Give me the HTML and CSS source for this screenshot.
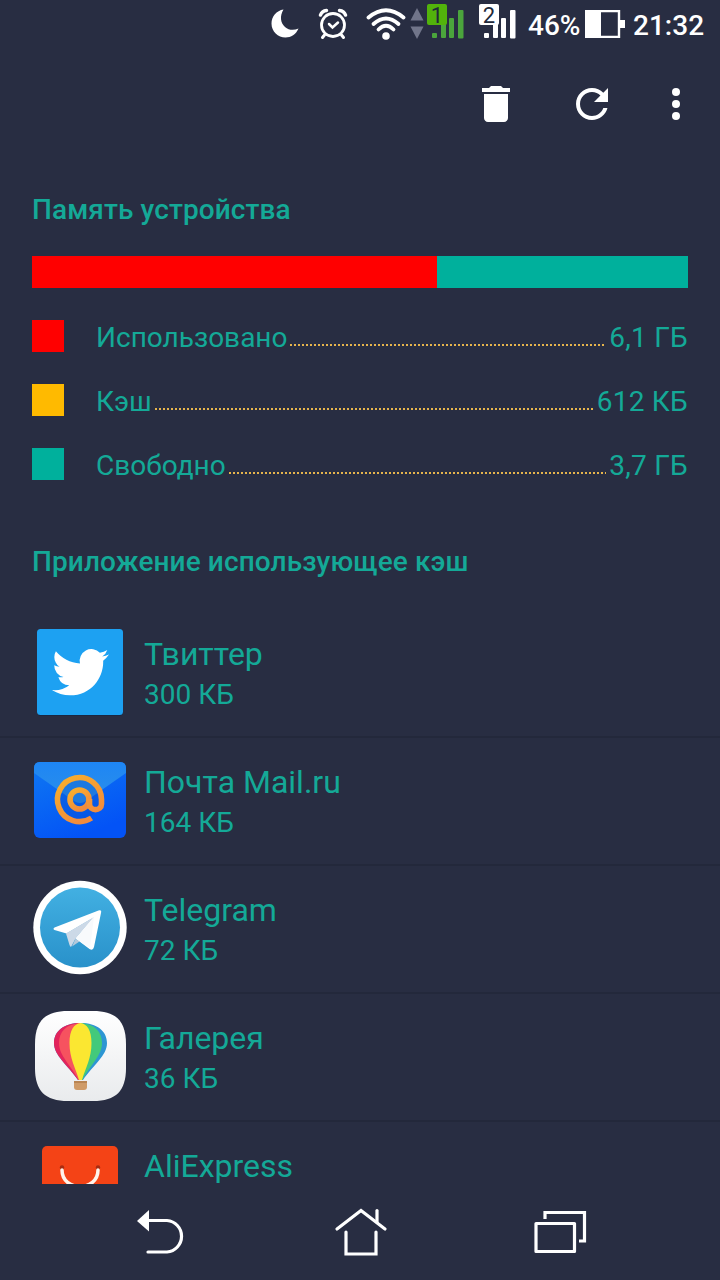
FILE: index.html
```
<!DOCTYPE html>
<html lang="ru">
<head>
    <meta charset="UTF-8">
    <meta name="viewport" content="width=device-width, initial-scale=1.0">
    <title>Очистка кэша</title>
    <link rel="stylesheet" href="styles.css">
</head>
<body>
    <div class="screen">
        <!-- Status bar -->
        <div class="status-bar">
            <svg class="moon" width="28" height="30" viewBox="0 0 28 30">
                <path d="M12.500 0.500C8.500 7 9.500 14 14 18C18 21.500 23 21.500 27.500 19.500C25 25.500 20 28.500 14.500 28.500C7 28.500 0.500 22.500 0.500 14.500C0.500 7.500 5.500 1.500 12.500 0.500Z" fill="#fff"/>
            </svg>
            <svg class="alarm" width="30" height="32" viewBox="0 0 30 32" fill="none" stroke="#fff" stroke-linecap="round">
                <circle cx="15" cy="17" r="11.500" stroke-width="2.800"/>
                <path d="M2.500 7Q4 3 8.500 2.500M27.500 7Q26 3 21.500 2.500" stroke-width="3.500"/>
                <path d="M6.500 27L4.500 29.500M23.500 27L25.500 29.500" stroke-width="3"/>
                <path d="M11 16L14.500 19.500L20 14.500" stroke-width="2.500"/>
            </svg>
            <svg class="wifi" width="40" height="32" viewBox="0 0 40 32" fill="none" stroke="#fff" stroke-width="3.800" stroke-linecap="round">
                <path d="M2.500 9.500Q20 -5 37.500 9.500"/>
                <path d="M7.500 16Q20 5 32.500 16"/>
                <path d="M12.500 21.500Q20 14 27.500 21.500"/>
                <circle cx="20" cy="28" r="3.800" fill="#fff" stroke="none"/>
            </svg>
            <svg class="traffic" width="14" height="32" viewBox="0 0 14 32" fill="#71758a">
                <path d="M7 0L13.500 12.500H0.500Z"/>
                <path d="M0.500 18.500H13.500L7 31Z"/>
            </svg>
            <svg class="sim" width="38" height="40" viewBox="0 -4 38 40">
                <g fill="#4ba53c">
                    <rect x="5" y="29" width="5" height="5" rx="1"/>
                    <rect x="14" y="17" width="5" height="17" rx="1"/>
                    <rect x="22" y="14" width="5" height="20" rx="1"/>
                    <rect x="31" y="6" width="5.500" height="28.500" rx="1"/>
                </g>
                <rect width="20" height="21" rx="2" fill="#52b30b"/>
                <text x="10" y="18.500" class="sim-number">1</text>
            </svg>
            <svg class="sim second" width="38" height="40" viewBox="0 -4 38 40">
                <g fill="#fff">
                    <rect x="5" y="29" width="5" height="5" rx="1"/>
                    <rect x="14" y="17" width="5" height="17" rx="1"/>
                    <rect x="22" y="14" width="5" height="20" rx="1"/>
                    <rect x="31" y="6" width="5.500" height="28.500" rx="1"/>
                    <rect width="20" height="21" rx="2"/>
                </g>
                <text x="10" y="18.500" class="sim-number">2</text>
            </svg>
            <span class="percent">46%</span>
            <svg class="battery" width="40" height="28" viewBox="0 0 40 28">
                <path d="M1 1H34V27H1Z" fill="none" stroke="#fff" stroke-width="2.400"/>
                <path d="M0 0H16V28H0ZM35 10H40V18H35Z" fill="#fff"/>
            </svg>
            <span class="clock">21:32</span>
        </div>

        <!-- Toolbar -->
        <div class="toolbar">
            <svg width="48" height="48" viewBox="0 0 24 24" fill="#fff">
                <path d="M6 19c0 1.100.9 2 2 2h8c1.100 0 2-.9 2-2V7H6v12zM19 4h-3.500l-1-1h-5l-1 1H5v2h14V4z"/>
            </svg>
            <svg width="48" height="48" viewBox="0 0 24 24" fill="#fff">
                <path d="M17.650 6.350C16.200 4.900 14.210 4 12 4c-4.420 0-7.990 3.580-7.990 8s3.570 8 7.990 8c3.730 0 6.840-2.550 7.730-6h-2.080c-.82 2.330-3.040 4-5.650 4-3.310 0-6-2.690-6-6s2.690-6 6-6c1.660 0 3.140.69 4.220 1.780L13 11h7V4l-2.350 2.350z"/>
            </svg>
            <svg class="more" width="48" height="48" viewBox="0 0 24 24" fill="#fff">
                <circle cx="12" cy="6" r="2"/>
                <circle cx="12" cy="12" r="2"/>
                <circle cx="12" cy="18" r="2"/>
            </svg>
        </div>

        <!-- Storage -->
        <div class="storage">
            <h2>Память устройства</h2>
            <div class="bar">
                <div class="bar-used" style="width: 61.7%"></div>
            </div>
            <div class="legend">
                <div class="legend-row">
                    <span class="swatch used"></span>
                    <span>Использовано</span>
                    <span class="dots"></span>
                    <span class="value">6,1 ГБ</span>
                </div>
                <div class="legend-row">
                    <span class="swatch cache"></span>
                    <span>Кэш</span>
                    <span class="dots"></span>
                    <span class="value">612 КБ</span>
                </div>
                <div class="legend-row">
                    <span class="swatch free"></span>
                    <span>Свободно</span>
                    <span class="dots"></span>
                    <span class="value">3,7 ГБ</span>
                </div>
            </div>
            <h2 class="apps-title">Приложение использующее кэш</h2>
        </div>

        <!-- Apps -->
        <div class="apps">
            <div class="app">
                <svg width="96" height="96" viewBox="0 0 96 96">
                    <rect x="5" y="6" width="86" height="86" rx="4" fill="#1b2742"/>
                    <rect x="5" y="5" width="86" height="86" rx="3.500" fill="#1da1f2"/>
                    <path transform="translate(20 19.700) scale(2.375)" fill="#fff" d="M23.953 4.570a10 10 0 01-2.825.775 4.958 4.958 0 002.163-2.723c-.951.555-2.005.959-3.127 1.184a4.920 4.920 0 00-8.384 4.482C7.690 8.095 4.067 6.130 1.640 3.162a4.822 4.822 0 00-.666 2.475c0 1.710.87 3.213 2.188 4.096a4.904 4.904 0 01-2.228-.616v.06a4.923 4.923 0 003.946 4.827 4.996 4.996 0 01-2.212.085 4.936 4.936 0 004.604 3.417 9.867 9.867 0 01-6.102 2.105c-.39 0-.779-.023-1.170-.067a13.995 13.995 0 007.557 2.209c9.053 0 13.998-7.496 13.998-13.985 0-.21 0-.42-.015-.63A9.935 9.935 0 0024 4.590z"/>
                </svg>
                <div class="app-info">
                    <div class="name">Твиттер</div>
                    <div class="size">300 КБ</div>
                </div>
            </div>
            <div class="app">
                <svg width="96" height="96" viewBox="0 0 96 96">
                    <defs>
                        <linearGradient id="mailBody" x1="0" y1="0" x2="0.500" y2="1">
                            <stop offset="0" stop-color="#0f78f2"/>
                            <stop offset="1" stop-color="#0353f6"/>
                        </linearGradient>
                        <linearGradient id="mailFlap" x1="0" y1="0" x2="0" y2="1">
                            <stop offset="0" stop-color="#1e86f5"/>
                            <stop offset="1" stop-color="#2b8fe8"/>
                        </linearGradient>
                        <linearGradient id="mailAt" x1="0" y1="0" x2="0.600" y2="1">
                            <stop offset="0" stop-color="#f9b02c"/>
                            <stop offset="1" stop-color="#f28b3c"/>
                        </linearGradient>
                    </defs>
                    <rect x="2" y="10" width="92" height="76" rx="6" fill="url(#mailBody)"/>
                    <path d="M2 21V16Q2 10 8 10H88Q94 10 94 16V21L54 49Q48 53 42 49Z" fill="url(#mailFlap)"/>
                    <circle cx="47.500" cy="47.500" r="20" fill="#0b4fc4" fill-opacity="0.300"/>
                    <g fill="none" stroke="url(#mailAt)" stroke-width="5.600">
                        <circle cx="47.500" cy="47.500" r="9.500"/>
                        <path d="M59.500 66A22 22 0 1 1 69.500 47.500V52C69.500 59.500 57.500 59.500 57.500 52V47"/>
                    </g>
                </svg>
                <div class="app-info">
                    <div class="name">Почта Mail.ru</div>
                    <div class="size">164 КБ</div>
                </div>
            </div>
            <div class="app">
                <svg width="96" height="96" viewBox="0 0 96 96">
                    <defs>
                        <linearGradient id="tgBody" x1="0" y1="0" x2="0" y2="1">
                            <stop offset="0" stop-color="#42b0e2"/>
                            <stop offset="1" stop-color="#2991ca"/>
                        </linearGradient>
                    </defs>
                    <circle cx="48" cy="47.500" r="46.700" fill="#fff"/>
                    <circle cx="48" cy="47.500" r="40" fill="url(#tgBody)"/>
                    <path d="M22.500 47.500L66.500 30.500Q70 29.500 69 33L62 67Q61 71 57.500 69L43.500 58.500L60 38.500L34.500 53.500L22.500 50Q20.500 48.800 22.500 47.500Z" fill="#fff"/>
                    <path d="M43.500 58.500L39 67Q38 66.500 37.500 65L34 53.500L62 37Z" fill="#ccd9e7"/>
                    <path d="M43.500 58.500L40 66.500L47.500 61.500Z" fill="#b4c8da"/>
                    <path d="M43.500 58.500L62 37L58 68Z" fill="#f8fafc"/>
                </svg>
                <div class="app-info">
                    <div class="name">Telegram</div>
                    <div class="size">72 КБ</div>
                </div>
            </div>
            <div class="app">
                <svg width="96" height="96" viewBox="0 0 96 96">
                    <defs>
                        <linearGradient id="galleryBody" x1="0" y1="0" x2="0" y2="1">
                            <stop offset="0" stop-color="#fff"/>
                            <stop offset="1" stop-color="#e9ebed"/>
                        </linearGradient>
                    </defs>
                    <path d="M36 3H61C84 3 94 13 94 36V60C94 83 84 93 61 93H36C13 93 3 83 3 60V36C3 13 13 3 36 3Z" fill="url(#galleryBody)"/>
                    <path d="M48.500 15C32 15 22 23 22 35C22 48 36 57 46 72H51C61 57 75 48 75 35C75 23 65 15 48.500 15Z" fill="#2d96d3"/>
                    <path d="M48.500 15C32 15 22 23 22 35C22 48 36 57 46 72H49Z" fill="#e3245c"/>
                    <path d="M48.500 15C34 16 27 24 27 35C27 48 39 57 46.500 72H49Z" fill="#f6525f"/>
                    <path d="M48.500 15C63 16 70 24 70 35C70 48 58 57 50.500 72H48Z" fill="#43c97b"/>
                    <path d="M48.500 15C42 16 37.500 22 37.500 35C37.500 50 43.500 60 47 72H50C53.500 60 59.500 50 59.500 35C59.500 22 55 16 48.500 15Z" fill="#fbe731"/>
                    <path d="M42 73H55V79Q55 82 52 82H45Q42 82 42 79Z" fill="#cf9b68"/>
                    <path d="M42 73H55V75H42Z" fill="#b98553"/>
                </svg>
                <div class="app-info">
                    <div class="name">Галерея</div>
                    <div class="size">36 КБ</div>
                </div>
            </div>
            <div class="app">
                <svg width="96" height="96" viewBox="0 0 96 96">
                    <rect x="10" y="10" width="76" height="76" rx="5" fill="#f44316"/>
                    <circle cx="30" cy="31.500" r="2.200" fill="#a82c10"/>
                    <circle cx="66" cy="31.500" r="2.200" fill="#a82c10"/>
                    <path d="M30 34C30 56 66 56 66 34" fill="none" stroke="#fff3ea" stroke-width="3.500" stroke-linecap="round"/>
                </svg>
                <div class="app-info">
                    <div class="name">AliExpress</div>
                </div>
            </div>
        </div>

        <!-- Navigation -->
        <div class="nav">
            <svg width="56" height="56" viewBox="0 0 56 56">
                <path d="M4 17L16 6V27.500Z" fill="#fff"/>
                <path d="M15 16.500H34A15.800 15.800 0 0 1 34 48H15" fill="none" stroke="#fff" stroke-width="3.200" stroke-linecap="round"/>
            </svg>
            <svg width="56" height="56" viewBox="0 0 56 56" fill="none" stroke="#fff" stroke-width="3.200" stroke-linecap="round">
                <path d="M4 25L28 6.500L52 25"/>
                <path d="M44 6.500V18"/>
                <path d="M13 28V50H43V28"/>
            </svg>
            <svg width="56" height="56" viewBox="0 0 56 56" fill="none" stroke="#fff" stroke-width="3.200">
                <path d="M4 19.500H42.500V47.500H4Z" stroke-linejoin="round"/>
                <path d="M13 15V8.500H52.500V37H47"/>
            </svg>
        </div>
    </div>
</body>
</html>
```
FILE: styles.css
```
body {
    margin: 0;
    background-color: #282d42;
    font-family: Roboto, "Noto Sans", sans-serif;
    color: #14a997;
}
svg {
    display: block;
    flex-shrink: 0;
}
.screen {
    display: flex;
    flex-direction: column;
    width: 720px;
    height: 1280px;
    overflow: hidden;
}

/* status bar */
.status-bar {
    display: flex;
    align-items: center;
    justify-content: flex-end;
    height: 48px;
    padding-right: 16px;
    color: #fff;
    font-size: 28px;
    font-weight: 500;
}
.alarm {
    margin-left: 19px;
}
.wifi {
    margin-left: 18px;
}
.traffic {
    margin-left: 4px;
}
.sim {
    margin-left: 3px;
    margin-bottom: 8px;
}
.sim.second {
    margin-left: 14px;
}
.sim-number {
    font-size: 22px;
    font-weight: 400;
    text-anchor: middle;
    fill: #20283a;
}
.percent {
    width: 57px;
    margin-left: 11px;
    margin-top: 2px;
}
.clock {
    width: 71px;
    margin-left: 8px;
    margin-top: 2px;
}

/* toolbar */
.toolbar {
    display: flex;
    justify-content: flex-end;
    gap: 48px;
    padding: 32px 20px;
}
.more {
    margin-left: -12px;
}

/* storage */
.storage {
    padding: 34px 32px 0;
    font-size: 28px;
}
h2 {
    margin: 0;
    font-size: 28px;
    font-weight: 500;
    line-height: 32px;
    letter-spacing: 0.1px;
}
.bar {
    height: 32px;
    margin-top: 30px;
    background-color: #00b09c;
}
.bar-used {
    height: 32px;
    background-color: #ff0000;
}
.legend {
    display: flex;
    flex-direction: column;
    gap: 32px;
    margin: 32px 0 66px;
}
.legend-row {
    display: flex;
    height: 32px;
    line-height: 36px;
}
.swatch {
    width: 32px;
    margin-right: 32px;
}
.used {
    background-color: #ff0000;
}
.cache {
    background-color: #ffba00;
}
.free {
    background-color: #00b09c;
}
.dots {
    flex: 1;
    height: 2px;
    margin: 24px 3px 0 3px;
    background: repeating-linear-gradient(to right, #e6b44c 0 2px, transparent 2px 4px);
}
.value {
    letter-spacing: 0.25px;
}

/* apps list */
.apps {
    flex: 1;
    min-height: 0;
    margin-top: 30px;
    overflow: hidden;
}
.app {
    display: flex;
    box-sizing: border-box;
    height: 128px;
    padding: 16px 32px 0;
}
.app + .app {
    border-top: 2px solid #23283b;
    padding-top: 14px;
}
.app-info {
    margin-left: 16px;
    padding-top: 10px;
}
.name {
    font-size: 32px;
    line-height: 40px;
}
.size {
    font-size: 28px;
    line-height: 42px;
}

/* navigation */
.nav {
    display: flex;
    justify-content: space-between;
    height: 76px;
    padding: 20px 132px 0 133px;
}
```
